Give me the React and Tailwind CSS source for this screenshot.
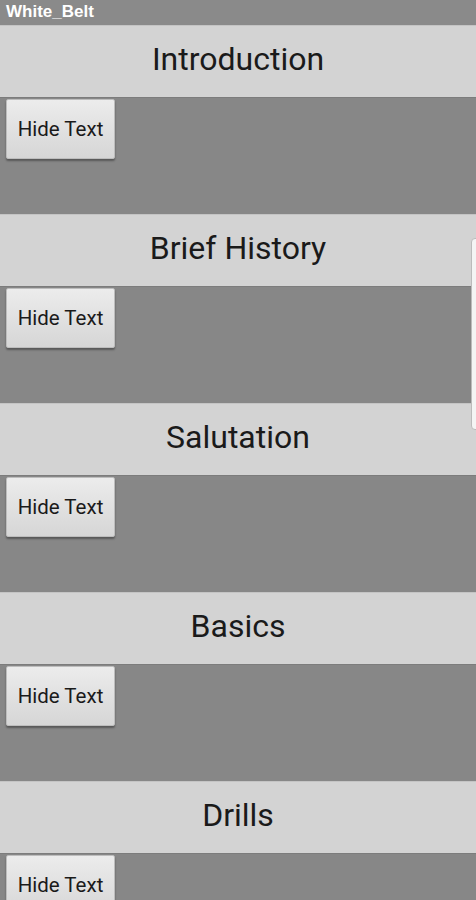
import React from "react";

const sections = ["Introduction", "Brief History", "Salutation", "Basics", "Drills"];

export default function App() {
  return (
    <div className="relative w-[476px] h-[900px] overflow-hidden bg-[#878787]" style={{ fontFamily: "Roboto, 'Noto Sans', sans-serif" }}>
      <div className="h-[25px] bg-[#8a8a8a] flex items-center pl-[6px] pb-[2px]">
        <span className="text-white font-bold text-[17px] leading-none" style={{ fontFamily: "'Liberation Sans', Arial, sans-serif" }}>White_Belt</span>
      </div>
      {sections.map((s) => (
        <div key={s}>
          <div className="h-[72px] bg-[#d3d3d3] flex items-center justify-center border-t border-[#c4c4c4] pb-[6px]">
            <span className="text-[32px] text-[#1a1a1a] leading-none">{s}</span>
          </div>
          <div className="h-[117px] bg-[#878787] border-t border-[#7c7c7c] pt-[1px] pl-[6px]">
            <button className="w-[109px] h-[60px] bg-gradient-to-b from-[#ececec] to-[#d6d6d6] border border-[#bdbdbd] rounded-[2px] shadow-[0_2px_2px_rgba(0,0,0,0.35)] text-[20.5px] text-[#1a1a1a] flex items-center justify-center">
              Hide Text
            </button>
          </div>
        </div>
      ))}
      <div className="absolute left-[471px] top-[238px] w-[10px] h-[192px] bg-[#f4f4f4] border border-[#bbbbbb] rounded-[4px]" />
    </div>
  );
}
